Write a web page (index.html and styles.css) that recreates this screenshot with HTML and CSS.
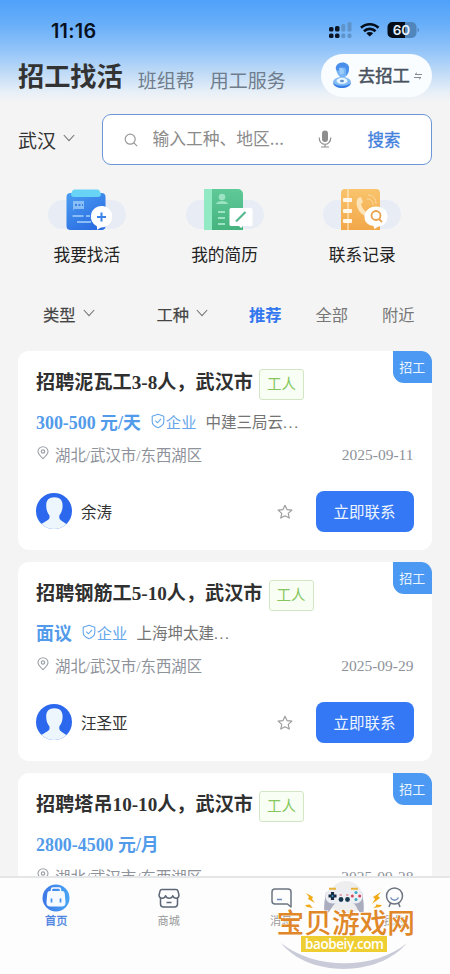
FILE: index.html
```html
<!DOCTYPE html>
<html lang="zh-CN">
<head>
<meta charset="utf-8">
<meta name="viewport" content="width=device-width, initial-scale=1">
<title>招工找活</title>
<link rel="stylesheet" href="styles.css">
</head>
<body>
<svg class="defs" width="0" height="0" aria-hidden="true">
  <defs>
    <linearGradient id="blue" x1="0" y1="0" x2=".6" y2="1"><stop offset="0" stop-color="#4a9df2"/><stop offset="1" stop-color="#2c6ee2"/></linearGradient>
    <linearGradient id="green" x1="0" y1="0" x2="0" y2="1"><stop offset="0" stop-color="#5fc998"/><stop offset="1" stop-color="#46b47f"/></linearGradient>
    <linearGradient id="orange" x1="0" y1="0" x2="0" y2="1"><stop offset="0" stop-color="#f9c46c"/><stop offset="1" stop-color="#f2a749"/></linearGradient>
    <linearGradient id="home" x1="0" y1="0" x2="1" y2="0"><stop offset="0" stop-color="#3d76e8"/><stop offset="1" stop-color="#48a5f5"/></linearGradient>
    <clipPath id="round"><circle cx="18" cy="18" r="18"/></clipPath>
  </defs>
  <symbol id="chevron" viewBox="0 0 12 8"><path d="M.8 1 6 6.600 11.200 1" fill="none" stroke="#777" stroke-width="1.100"/></symbol>
  <symbol id="shield" viewBox="0 0 14 16"><path d="M7 1.200 12.800 3.300v5.200c0 2.800-2.400 4.900-5.800 6.200C3.600 13.400 1.200 11.300 1.200 8.500V3.300Z" fill="none" stroke="#65a6ea" stroke-width="1.100" stroke-linejoin="round"/><path d="m4.300 7.700 2.100 2.100 3.700-3.900" fill="none" stroke="#65a6ea" stroke-width="1.100"/></symbol>
  <symbol id="pin" viewBox="0 0 12 14"><path d="M6 12.700C3.500 10.300 1 8 1 5.500a5 4.800 0 0 1 10 0C11 8 8.500 10.300 6 12.700Z" fill="none" stroke="#9ca0a8" stroke-width="1.100"/><circle cx="6" cy="5.500" r="1.700" fill="none" stroke="#9ca0a8" stroke-width="1.200"/></symbol>
  <symbol id="star" viewBox="0 0 16 16"><path d="m8 1.200 2 4.400 4.900.5-3.700 3.200 1.100 4.800L8 11.700l-4.300 2.400 1.100-4.800L1.100 6.100 6 5.600Z" fill="none" stroke="#999" stroke-width="1.100" stroke-linejoin="round"/></symbol>
  <symbol id="avatar" viewBox="0 0 36 37"><g clip-path="url(#round)"><path fill="#2c68ee" d="M0 0h36v36H0z"/><path fill="#edf5fd" d="M10.200 12.500c0-5.500 2.800-8.300 8.200-8.300s8.200 2.800 8.200 8.300c0 5-1.500 7.500-3.300 10v2.200c0 2.300 3.500 3.800 7.200 6.300V37H5v-6c4-2.400 8.500-4 8.500-6.300v-2.200c-1.800-2.500-3.300-5-3.300-10Z"/></g></symbol>
</svg>

<div class="app">
  <header class="top">
    <div class="status">
      <span class="time">11:16</span>
      <svg class="signals" viewBox="0 0 92 18" width="92" height="18">
        <g fill="#0a1626"><rect x="1" y="6" width="4.500" height="4.500" rx="1.500"/><rect x="7" y="5" width="4.500" height="5.500" rx="1.500"/><rect x="1" y="12.500" width="4.500" height="4.500" rx="1.500"/><rect x="7" y="12.500" width="4.500" height="4.500" rx="1.500"/></g>
        <g fill="#5f94cb"><rect x="13.300" y="3" width="4" height="7.500" rx="1.500"/><rect x="19.500" y="1" width="4" height="9.500" rx="1.500"/><rect x="13.300" y="12.500" width="4" height="4.500" rx="1.500"/><rect x="19.500" y="12.500" width="4" height="4.500" rx="1.500"/></g>
        <g fill="none" stroke="#050d18" stroke-width="2.600"><path d="M33 6.800a12.500 12.500 0 0 1 17.500 0"/><path d="M36 10.200a8.200 8.200 0 0 1 11.500 0"/></g>
        <path d="M38.300 12.300a5 5 0 0 1 6.900 0L41.700 15.600Z" fill="#050d18"/>
        <path d="M65 1h-.500a5 5 0 0 0-5 5v6a5 5 0 0 0 5 5H77V1Z" fill="#050d18"/><path d="M77 1h6.500a5 5 0 0 1 5 5v6a5 5 0 0 1-5 5H77Z" fill="#5186bd"/><path d="M89.500 7c2 .5 2 3.500 0 4Z" fill="#5186bd"/>
        <text class="battery" x="73.500" y="13.800" text-anchor="middle">60</text>
      </svg>
    </div>
    <div class="heading">
      <h1>招工找活</h1>
      <span class="sub">班组帮</span>
      <span class="sub">用工服务</span>
      <button class="switch">
        <svg width="20" height="27" viewBox="0 0 20 27">
          <ellipse cx="10" cy="20" rx="9" ry="5" fill="#82baf4"/><path d="M1 20c0 8 18 8 18 0-1 5-17 5-18 0Z" fill="#357ee7"/>
          <ellipse cx="10" cy="18.800" rx="5.500" ry="3" fill="#e7f6ff"/><ellipse cx="10" cy="19" rx="2" ry="1.200" fill="#6590c5"/>
          <path d="M5 4c2-4.500 11-4.500 12 1.500.5 5-1.500 8-4 9.500H8C5 12 3 8 5 4Z" fill="#78b5f5"/><path d="M4 4.500C6-1 16-1 17 5.500c0 3-1 6-3 8 0-4 1-7-2-8-3 0-4 0-5 3-2 1-4-1-3-4Z" fill="#4a8fec"/><path d="M7 6c3-1 5 1 5 4 0 2-2 3-4 2Z" fill="#9dccf8"/>
        </svg>
        <span>去招工</span>
        <svg width="8" height="8" viewBox="0 0 8 8"><path d="M8 2.500H1L3 .7M0 5.500h7L5 7.300" fill="none" stroke="#777e88" stroke-width=".9"/></svg>
      </button>
    </div>
  </header>

  <div class="searchrow">
    <div class="city"><span>武汉</span><svg width="12" height="8"><use href="#chevron"/></svg></div>
    <div class="search">
      <svg class="lens" width="14" height="14" viewBox="0 0 14 14"><circle cx="6.200" cy="6.200" r="5" fill="none" stroke="#999" stroke-width="1.200"/><path d="m9.800 9.800 3.400 3.400" stroke="#999" stroke-width="1.200"/></svg>
      <span class="hint">输入工种、地区...</span>
      <svg class="mic" width="14" height="18" viewBox="0 0 14 18"><rect x="4" y=".5" width="6" height="11.500" rx="3" fill="#8e8e8e"/><path d="M1.200 7.500c0 9 11.600 9 11.600 0M7 14v3M3 17h8" fill="none" stroke="#8e8e8e" stroke-width="1.200"/></svg>
      <span class="go">搜索</span>
    </div>
  </div>

  <nav class="shortcuts">
    <a><svg width="78" height="42" viewBox="0 0 78 42">
      <rect y="11" width="78" height="29" rx="14.500" fill="#e8edf5"/><rect x="18.500" y="4" width="39" height="37" rx="4" fill="url(#blue)"/><path d="M24 2.500a3 3 0 0 1 3-2h22a3 3 0 0 1 3 2l1 2.500c0 2-1 3-3 3H26c-2 0-3-1-3-3Z" fill="#68d3f5"/>
      <g fill="#89bdf6"><path d="M25 12h11v8H26l-1 2Z"/><rect x="24.500" y="26" width="11" height="2"/><rect x="38" y="26" width="4" height="2"/><rect x="29" y="32" width="14" height="2"/></g><path d="M27 16h2m1.500 0h2m1.500 0h1" stroke="#3b82e4" stroke-width="2"/>
      <path d="M54 17a10.700 10.700 0 1 1-1 21.400l-4 2.300v-3.300A10.700 10.700 0 0 1 54 17Z" fill="#fff"/><path d="M53.500 23.500v9M49 28h9" stroke="#3c82e7" stroke-width="2"/>
    </svg><span>我要找活</span></a>
    <a><svg width="78" height="42" viewBox="0 0 78 42">
      <rect y="11" width="78" height="29" rx="14.500" fill="#e8edf5"/><path d="M18 0h34a5 5 0 0 1 5 5v36H18Z" fill="url(#green)"/><path d="M18 0h8v41h-8Z" fill="#91eac4"/>
      <g fill="#9be3c2"><circle cx="36" cy="8" r="3.300"/><path d="M30 15c1-4 11-4 12 0Z"/><rect x="32" y="22" width="7" height="2"/><rect x="32" y="28" width="7" height="2"/><rect x="32" y="34" width="7" height="2"/></g>
      <path d="M45 19h20a1.500 1.500 0 0 1 1.500 1.500v15A1.500 1.500 0 0 1 65 37h-8l-2 2-2-2h-8a1.500 1.500 0 0 1-1.500-1.500v-15A1.500 1.500 0 0 1 45 19Z" fill="#fff"/><path d="m50 32.500 9.500-9.500" stroke="#54b98d" stroke-width="2.200"/>
    </svg><span>我的简历</span></a>
    <a><svg width="78" height="42" viewBox="0 0 78 42">
      <rect y="11" width="78" height="29" rx="14.500" fill="#e8edf5"/><path d="M22 0h31a4 4 0 0 1 4 4v37H18V4a4 4 0 0 1 4-4Z" fill="url(#orange)"/><path d="M25 0v41" stroke="#fff1d5" stroke-width="1"/>
      <g fill="#fff8ea"><rect x="20" y="9" width="9" height="4" rx="1"/><rect x="20" y="20" width="9" height="4" rx="1"/><rect x="20" y="30" width="9" height="4" rx="1"/></g>
      <path d="m35 9 3-1 2 5-2 2c1 4 3 6 5 8l3-1 2 4-3 2c-9-2-14-13-10-19Z" fill="#fde3b8"/><path d="M44 10c4 0 6 2 6 6M45 6c5 0 8 4 8 9" stroke="#fbdca7" fill="none"/>
      <path d="M53 17.500c7 0 11.500 4 11.500 10s-4 9.500-9 10l-4 2.500-1-3c-6-1-9-4-9-9 0-6 5-10.500 11.500-10.500Z" fill="#fff"/><circle cx="53" cy="26.500" r="4.500" fill="none" stroke="#eaa24f" stroke-width="1.800"/><path d="m56 30 3 3" stroke="#eaa24f" stroke-width="1.800"/>
    </svg><span>联系记录</span></a>
  </nav>

  <div class="filters">
    <span class="drop">类型<svg width="12" height="8"><use href="#chevron"/></svg></span>
    <span class="drop">工种<svg width="12" height="8"><use href="#chevron"/></svg></span>
    <span class="active">推荐</span><span>全部</span><span>附近</span>
  </div>

  <main class="list">
    <article class="card">
      <span class="corner">招工</span>
      <div class="title"><h2>招聘泥瓦工3-8人，武汉市</h2><span class="tag">工人</span></div>
      <div class="pay"><b>300-500 元/天</b><span class="firm"><svg width="14" height="16"><use href="#shield"/></svg>企业</span><span class="company">中建三局云<i>...</i></span></div>
      <div class="place"><svg width="12" height="14"><use href="#pin"/></svg><span>湖北/武汉市/东西湖区</span><time>2025-09-11</time></div>
      <div class="person"><svg width="36" height="37"><use href="#avatar"/></svg><span>余涛</span><svg class="fav" width="16" height="16"><use href="#star"/></svg><button>立即联系</button></div>
    </article>
    <article class="card">
      <span class="corner">招工</span>
      <div class="title"><h2>招聘钢筋工5-10人，武汉市</h2><span class="tag">工人</span></div>
      <div class="pay"><b>面议</b><span class="firm"><svg width="14" height="16"><use href="#shield"/></svg>企业</span><span class="company">上海坤太建<i>...</i></span></div>
      <div class="place"><svg width="12" height="14"><use href="#pin"/></svg><span>湖北/武汉市/东西湖区</span><time>2025-09-29</time></div>
      <div class="person"><svg width="36" height="37"><use href="#avatar"/></svg><span>汪圣亚</span><svg class="fav" width="16" height="16"><use href="#star"/></svg><button>立即联系</button></div>
    </article>
    <article class="card last">
      <span class="corner">招工</span>
      <div class="title"><h2>招聘塔吊10-10人，武汉市</h2><span class="tag">工人</span></div>
      <div class="pay"><b>2800-4500 元/月</b></div>
      <div class="place"><svg width="12" height="14"><use href="#pin"/></svg><span>湖北/武汉市/东西湖区</span><time>2025-09-28</time></div>
    </article>
  </main>

  <footer class="tabs">
    <a class="on"><svg width="28" height="28" viewBox="0 0 28 28"><circle cx="14" cy="14" r="13.500" fill="url(#home)"/><path d="M9.500 7V5.500c0-1 .8-1.500 1.500-1.500h6c.7 0 1.500.5 1.500 1.500V7" fill="none" stroke="#fff" stroke-width="1.500"/><path d="M8 7h12c2 0 2.500 1 2.800 3l.7 8c.2 3-1 4.500-4 4.500h-11c-3 0-4.200-1.500-4-4.500l.7-8C5.500 8 6 7 8 7Z" fill="#f4faff"/><path d="M9.500 14.500v4M18.500 14.500v4" stroke="#458dea" stroke-width="1.700"/></svg><span>首页</span></a>
    <a><svg width="28" height="28" viewBox="0 0 28 28"><g fill="none" stroke="#5c6676" stroke-width="1.500" stroke-linejoin="round"><path d="M7 5.500h14c1.200 0 1.800.6 2 1.600l1 4c0 4-5 4-6.200.7-1 3.300-6.200 3.300-7.200 0C9.400 15.100 4 15.100 4 11.100l1-4c.2-1 .8-1.600 2-1.600Z"/><path d="M5.500 14v6c0 2 1 3 3 3h11c2 0 3-1 3-3v-6M11.500 18.500h5"/></g></svg><span>商城</span></a>
    <a><svg width="28" height="28" viewBox="0 0 28 28"><path d="M8 5h13c2 0 3 1 3 3v15l-3.500-3H8c-2 0-3-1-3-3V8c0-2 1-3 3-3Z" fill="none" stroke="#6c7480" stroke-width="1.500" stroke-linejoin="round"/><path d="M10 15.500h5" stroke="#6c8bb8" stroke-width="1.500"/></svg><span>消息</span></a>
    <a><svg width="28" height="28" viewBox="0 0 28 28"><g fill="none" stroke="#6c7480" stroke-width="1.500"><circle cx="14.500" cy="12" r="8"/><path d="m10.500 19-1.500 4M18.500 19l1.500 4"/></g><path d="M10.500 13.500c2 3.500 6 3.500 8 0" stroke="#6c8bb8" stroke-width="1.500" fill="none"/></svg><span>我的</span></a>
  </footer>

  <svg class="mark" width="146" height="96" viewBox="272 878 146 96">
    <circle cx="346" cy="898" r="17" fill="#eeeeef"/>
    <path d="M326 892c-1 7-3 16-1 22 5 0 7-9 11-11h17c4 2 5 11 10 11 2-6 0-15-1-22Z" fill="#a9adbd"/>
    <path d="M332 889h24c4.500 0 6.500 3.500 6.500 7.500s-3 7-7 7h-23c-4 0-7-3-7-7s2.500-7.500 6.500-7.500Z" fill="#eceef4"/>
    <path d="M329 888.700h7M351 888.700h7" stroke="#e7b339" stroke-width="2"/>
    <path d="M332.500 892v8M328.500 896h8" stroke="#192c43" stroke-width="3.200"/><circle cx="332.500" cy="896" r=".9" fill="#2da7d3"/>
    <circle cx="356" cy="892.500" r="1.500" fill="#3aa8be"/><circle cx="356" cy="899.500" r="1.500" fill="#3aa8be"/><circle cx="352.300" cy="896" r="1.500" fill="#d8435a"/><circle cx="359.700" cy="896" r="1.500" fill="#d8435a"/>
    <path d="M339.500 895h2.500M346 895h2.500" stroke="#e26277" stroke-width="1.200"/><circle cx="341" cy="899.500" r="2.400" fill="#193950"/><circle cx="347.500" cy="899.500" r="2.400" fill="#193950"/>
    <g fill="#f0ab16"><path d="m306 893 7 4-1 2 3 4-7-4 1-2Z"/><path d="m381 892-8 5 2 2-3 5 8-6-2-2Z"/><path d="m305 905 5-.5 1 1.500 2 2-6-1Z"/><path d="m382 905-6-.5v1.500l-3 2 7-1Z"/></g>
    <path d="M281 943c33 27 94 27 126 0-28 34-98 35-126 0Z" fill="#c9cbd9"/>
    <text class="mark-name" x="276.500" y="932.500">宝贝游戏网</text>
    <rect x="301" y="936" width="86" height="16" fill="#efce31"/>
    <text class="mark-url" x="344.500" y="948.500" text-anchor="middle" textLength="79">baobeiy.com</text>
  </svg>
</div>
</body>
</html>
```
FILE: styles.css
```css
* { box-sizing: border-box; }
body { margin: 0; background: #f4f4f4; font-family: "Noto Sans CJK SC", sans-serif; color: #333; }
h1, h2, b, i { margin: 0; font-style: normal; }
button { border: 0; padding: 0; font-family: inherit; }
svg { display: block; flex: none; }
span, h1, h2, time, b { white-space: nowrap; }
.defs { position: absolute; }
.app { position: relative; width: 450px; height: 974px; overflow: hidden; display: flex; flex-direction: column; }

.top { height: 105px; flex: none; background: linear-gradient(#4fa1fa 0, #69aff9 25px, #92c4f9 50px, #c4ddf7 75px, #e9f0f7 93px, #f4f4f4 103px); }
.status { height: 54px; padding: 21px 33px 0 51px; display: flex; justify-content: space-between; align-items: flex-start; margin-right: -3px; }
.time { font: 600 19.800px/20px Inter, sans-serif; color: #07101c; letter-spacing: .25px; }
.battery { font: 600 13.500px Inter, sans-serif; fill: #e6f1fb; }
.heading { display: flex; height: 43px; padding: 0 18px; align-items: center; }
h1 { font-size: 26.200px; line-height: 43px; font-weight: 700; margin-right: 15px; }
.sub { font-size: 19px; line-height: 20px; color: #707d8c; margin: 9px 15px 0 0; }
.switch { width: 111px; height: 43px; border-radius: 22px; background: #fafdff; margin-left: auto; padding-left: 11px; display: flex; align-items: center; color: #48515e; font-size: 17.300px; -webkit-text-stroke: .5px #48515e; }
.switch span { margin: -2px 4px 0 6px; }

.searchrow { display: flex; height: 60px; padding: 9px 18px 0; flex: none; }
.city { width: 84.500px; height: 51px; display: flex; align-items: center; gap: 7px; font-size: 19px; }
.city span { margin-top: -1px; }
.city svg { margin-top: -3px; }
.search { width: 330px; height: 51px; border: 1.500px solid #6b97d8; border-radius: 9px; background: #fff; display: flex; align-items: center; padding-left: 21px; }
.hint { width: 165px; margin-left: 14px; margin-top: -3px; color: #8b8b8b; font-size: 16.800px; }
.mic { margin-top: -2px; margin-right: 35px; margin-left: 1px; }
.go { color: #4280dc; font-size: 16.500px; margin-top: -2px; -webkit-text-stroke: .3px #4280dc; }

.shortcuts { display: flex; height: 107px; padding: 24px 18px 0; flex: none; }
.shortcuts a { width: 137.700px; display: flex; flex-direction: column; align-items: center; font-size: 16.700px; line-height: 24px; gap: 11px; color: #222; }
.shortcuts svg { height: 42px; }

.filters { height: 79px; padding: 30px 0 0 43px; display: flex; align-items: flex-start; font-size: 16.300px; line-height: 24px; color: #777; flex: none; }
.filters span { width: 66.500px; }
.filters .drop { color: #444; width: 113.500px; display: flex; align-items: center; gap: 7px; -webkit-text-stroke: .2px #444; }
.filters .drop + .drop { width: 92.500px; }
.filters .drop svg { margin-top: -3px; }
.filters .active { color: #3277ef; font-weight: 700; }

.list { padding: 0 18px; display: flex; flex-direction: column; gap: 12px; }
.card { position: relative; width: 413.500px; height: 199px; flex: none; background: #fff; border-radius: 11px; padding: 17px 18px 0; font-family: "Liberation Serif", "Noto Sans CJK SC", serif; }
.corner { position: absolute; right: 0; top: 0; width: 38.500px; height: 31.500px; border-radius: 0 11px; background: #4b99f2; color: #edf6ff; font-size: 13px; line-height: 33px; text-align: center; }
.title { display: flex; height: 32px; align-items: flex-start; gap: 6px; }
h2 { font-size: 19.150px; line-height: 30px; font-weight: 700; color: #303030; }
.tag { width: 45px; height: 31px; margin-top: 1px; border: 1.500px solid #d2e5c4; border-radius: 3px; background: #f8fef3; color: #85c75e; font-size: 14.500px; line-height: 29px; text-align: center; }
.pay { display: flex; height: 38px; align-items: center; padding-top: 3px; font-size: 15.500px; }
.pay b { font-size: 17.900px; color: #529bea; margin-right: 10px; }
.firm { display: flex; align-items: center; color: #65a6ea; font-size: 15.300px; gap: 1px; margin-right: 9px; }
.company { color: #747474; }
.company i { letter-spacing: 1.700px; }
.place { display: flex; height: 28px; align-items: center; color: #8e929a; font-size: 15.400px; padding-top: 3px; }
.place svg { margin: -2px 6px 0 1px; }
.place time { margin: 2px 0 0 auto; font-size: 15.500px; }
.person { display: flex; height: 41px; margin-top: 25px; align-items: center; font-size: 15.500px; }
.person > span { margin: -2px 0 0 9px; }
.fav { margin: 0 23px 0 auto; }
.person button { width: 98px; height: 41px; border-radius: 8px; background: #3478f5; color: #eef5ff; font-size: 15.500px; padding-bottom: 2px; }

.tabs { position: absolute; left: 0; right: 0; bottom: 0; height: 98px; background: #fdfdfe; border-top: 2px solid #e5e6e8; display: flex; padding-top: 6px; }
.tabs a { width: 112.500px; display: flex; flex-direction: column; align-items: center; color: #999; font-size: 11.200px; line-height: 17px; }
.tabs .on { color: #4681e0; -webkit-text-stroke: .3px #4681e0; }
.mark { position: absolute; left: 272px; top: 878px; }
.mark-name { font: 500 27.700px "Noto Sans CJK SC", sans-serif; fill: #df8729; stroke: #fff; stroke-width: 1.200px; paint-order: stroke; }
.mark-url { font: 600 13.500px "Open Sans", sans-serif; fill: #fff; }
```
